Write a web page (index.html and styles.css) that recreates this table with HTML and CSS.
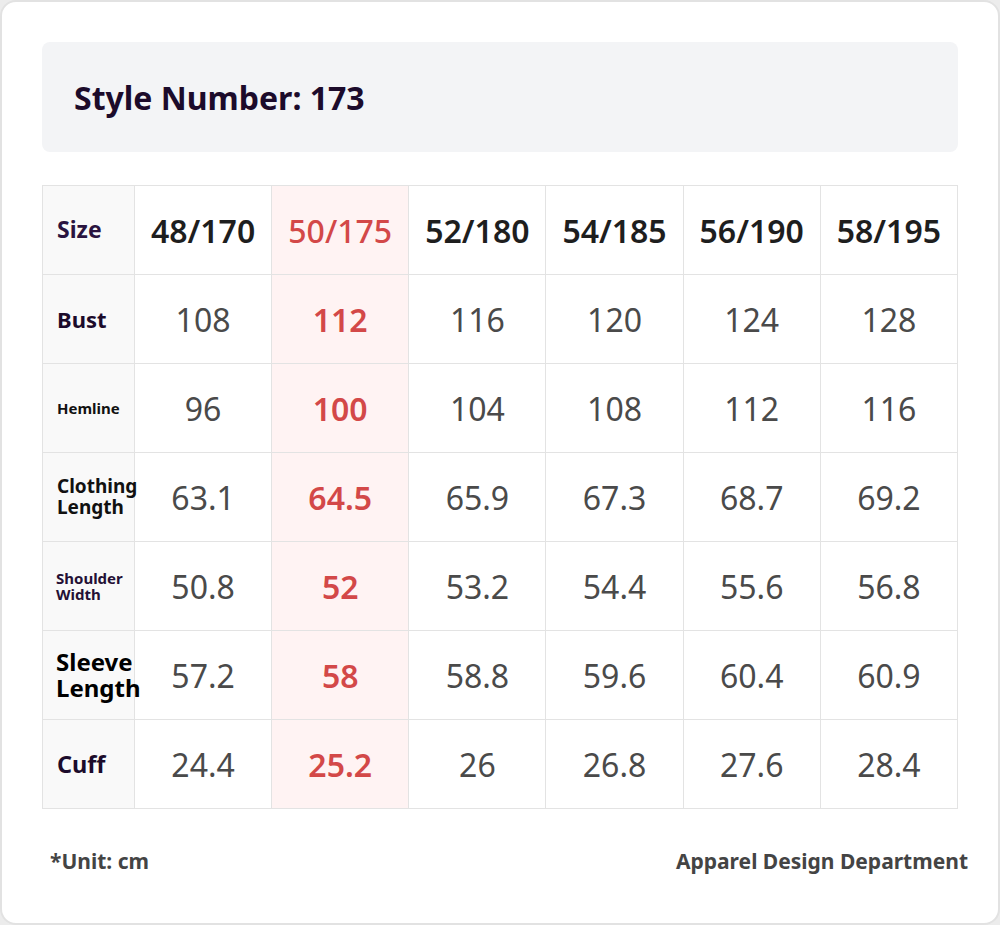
FILE: index.html
```html
<!DOCTYPE html>
<html lang="en">
<head>
<meta charset="utf-8">
<title>Size Chart</title>
<link rel="stylesheet" href="styles.css">
</head>
<body>
<div class="card">
  <div class="title-box"><h1 class="title">Style Number: 173</h1></div>
  <table class="chart">
    <colgroup><col class="c-label"><col><col><col><col><col><col></colgroup>
    <tr class="head">
      <th class="label l-size">Size</th>
      <td>48/170</td><td class="hl">50/175</td><td>52/180</td><td>54/185</td><td>56/190</td><td>58/195</td>
    </tr>
    <tr>
      <th class="label l-bust">Bust</th>
      <td>108</td><td class="hl">112</td><td>116</td><td>120</td><td>124</td><td>128</td>
    </tr>
    <tr>
      <th class="label l-hem">Hemline</th>
      <td>96</td><td class="hl">100</td><td>104</td><td>108</td><td>112</td><td>116</td>
    </tr>
    <tr>
      <th class="label l-cloth">Clothing Length</th>
      <td>63.1</td><td class="hl">64.5</td><td>65.9</td><td>67.3</td><td>68.7</td><td>69.2</td>
    </tr>
    <tr>
      <th class="label l-shoulder">Shoulder Width</th>
      <td>50.8</td><td class="hl">52</td><td>53.2</td><td>54.4</td><td>55.6</td><td>56.8</td>
    </tr>
    <tr>
      <th class="label l-sleeve">Sleeve Length</th>
      <td>57.2</td><td class="hl">58</td><td>58.8</td><td>59.6</td><td>60.4</td><td>60.9</td>
    </tr>
    <tr>
      <th class="label l-cuff">Cuff</th>
      <td>24.4</td><td class="hl">25.2</td><td>26</td><td>26.8</td><td>27.6</td><td>28.4</td>
    </tr>
  </table>
  <div class="footer">
    <span class="unit">*Unit: cm</span>
    <span class="dept">Apparel Design Department</span>
  </div>
</div>
</body>
</html>
```
FILE: styles.css
```css
html, body {
  margin: 0;
  padding: 0;
  background: #ececec;
}
body {
  font-family: "Noto Sans", "Open Sans", sans-serif;
}
.card {
  box-sizing: border-box;
  width: 1000px;
  height: 925px;
  background: #ffffff;
  border: 2px solid #e2e2e2;
  border-radius: 16px;
  padding: 40px 40px 0 40px;
}
.title-box {
  background: #f3f4f6;
  border-radius: 8px;
  height: 110px;
  display: flex;
  align-items: center;
  padding: 0 32px;
}
.title {
  margin: 0;
  font-size: 32px;
  font-weight: 700;
  color: #1c0b2b;
}
.chart {
  margin-top: 33px;
  width: 916px;
  border-collapse: collapse;
  table-layout: fixed;
}
.c-label { width: 92px; }
.chart tr { height: 89px; }
.chart th, .chart td {
  border: 1px solid #e3e3e3;
  padding: 0;
}
.chart td {
  text-align: center;
  font-size: 32px;
  font-weight: 400;
  color: #4a4a4a;
}
.chart .head td {
  font-weight: 600;
  color: #1e1e1e;
}
.chart td.hl {
  background: #fff3f3;
  color: #d34848;
  font-weight: 600;
}
.chart .head td.hl {
  font-weight: 500;
}
.label {
  background: #f9f9f9;
  text-align: left;
  padding-left: 14px !important;
  font-weight: 700;
  color: #111111;
  line-height: 1.12;
  vertical-align: middle;
  white-space: normal;
}
.l-size { font-size: 23px; color: #2a1440; }
.l-bust { font-size: 22px; color: #1c0b2b; }
.l-hem { font-size: 15px; color: #111111; }
.l-cloth { font-size: 19px; color: #111111; }
.l-shoulder { font-size: 15px; color: #241035; padding-left: 13px !important; line-height: 1.1; }
.l-sleeve { font-size: 24px; color: #000000; padding-left: 13px !important; line-height: 1.08; }
.l-cuff { font-size: 23.5px; color: #1c0b2b; }
.footer {
  display: flex;
  justify-content: space-between;
  align-items: center;
  margin-top: 38px;
  padding: 0 0 0 8px;
  margin-right: -10px;
  font-size: 21px;
  font-weight: 700;
  color: #444444;
}
```
